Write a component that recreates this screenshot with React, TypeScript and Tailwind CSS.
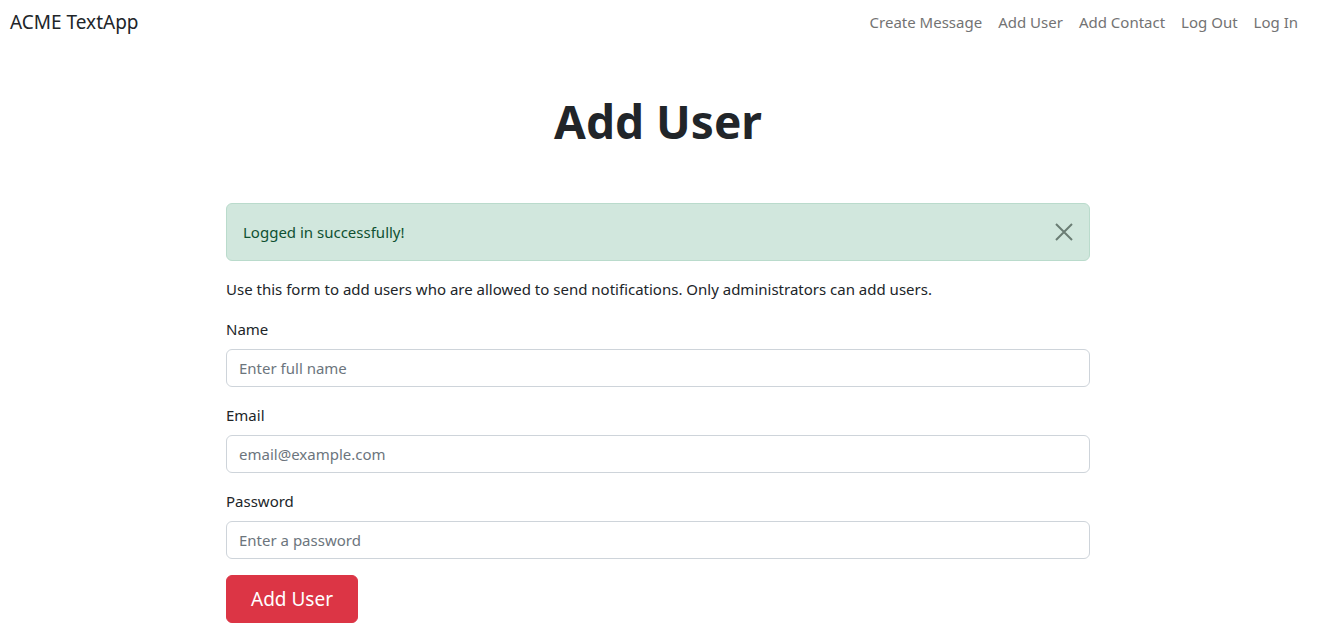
import React from "react";

export default function App() {
  const font = { fontFamily: '"Noto Sans", "Open Sans", sans-serif' };
  return (
    <div className="w-[1317px] min-h-[641px] bg-white text-[#212529]" style={font}>
      <nav className="flex items-center justify-between h-[44px] pl-[10px] pr-[11px]">
        <a className="text-[19px] leading-[30px] text-[#212529]">ACME TextApp</a>
        <div className="flex items-center text-[15px] leading-[24px] text-[#737373]">
          <a className="px-2">Create Message</a>
          <a className="px-2">Add User</a>
          <a className="px-2">Add Contact</a>
          <a className="px-2">Log Out</a>
          <a className="px-2">Log In</a>
        </div>
      </nav>
      <main className="w-[864px] ml-[226px]">
        <h1 className="text-center text-[46px] leading-[58px] font-bold pt-[48px] pb-[53px]">Add User</h1>
        <div className="relative flex items-center h-[58px] rounded-[6px] border border-[#badbcc] bg-[#d1e7dd] text-[#0f5132] px-4 text-[15px] leading-[24px] mb-4">
          <span>Logged in successfully!</span>
          <span className="absolute right-0 top-0 w-[50px] h-[56px] flex items-center justify-center">
            <svg width="18" height="18" viewBox="0 0 18 18" fill="none" stroke="#6a7d74" strokeWidth="2">
              <path d="M1 1L17 17M17 1L1 17" />
            </svg>
          </span>
        </div>
        <p className="text-[15px] leading-[24px] mb-4">
          Use this form to add users who are allowed to send notifications. Only administrators can add users.
        </p>
        <form className="flex flex-col">
          {[
            ["Name", "Enter full name"],
            ["Email", "email@example.com"],
            ["Password", "Enter a password"],
          ].map(([label, ph]) => (
            <div key={label} className="mb-4">
              <label className="block text-[15px] leading-[24px] mb-2">{label}</label>
              <div className="h-[38px] rounded-[6px] border border-[#ced4da] px-3 flex items-center text-[15px] text-[#6c757d]">
                {ph}
              </div>
            </div>
          ))}
          <div>
            <button type="button" className="h-[48px] px-[24px] rounded-[6px] bg-[#dc3545] text-white text-[19px] leading-[30px] border border-[#dc3545]">
              Add User
            </button>
          </div>
        </form>
      </main>
    </div>
  );
}
